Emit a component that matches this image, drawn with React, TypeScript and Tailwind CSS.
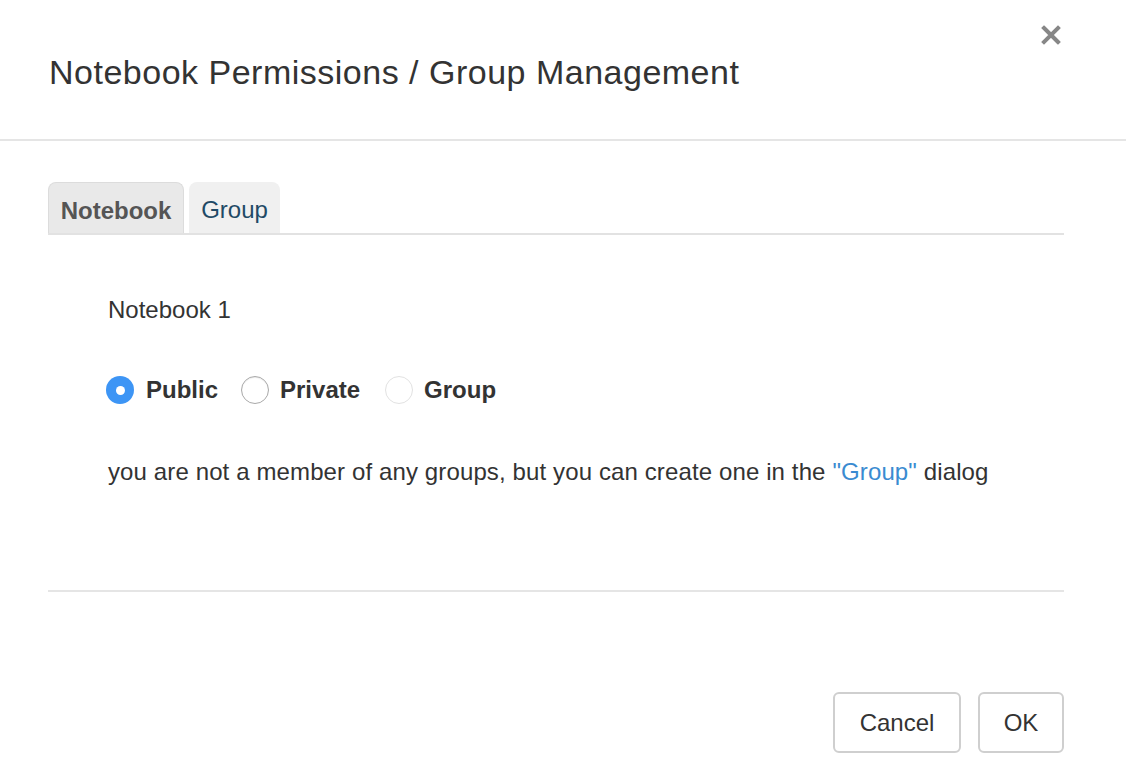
const Radio = ({ checked, disabled }: { checked?: boolean; disabled?: boolean }) => {
  if (checked) {
    return (
      <span className="flex h-[28px] w-[28px] items-center justify-center rounded-full bg-[#3d95f5]">
        <span className="h-[9px] w-[9px] rounded-full bg-white" />
      </span>
    );
  }
  return (
    <span
      className={
        disabled
          ? "h-[28px] w-[28px] rounded-full border border-[#e2e2e2] bg-white"
          : "h-[28px] w-[28px] rounded-full border border-[#a9a9a9] bg-white shadow-[inset_0_1px_1px_rgba(0,0,0,0.08)]"
      }
    />
  );
};

const App = () => {
  return (
    <div className="relative h-[780px] w-[1126px] bg-white font-[family-name:'Liberation_Sans',Arial,sans-serif] text-[#333]">
      {/* header */}
      <div className="h-[141px] border-b-2 border-[#e5e5e5] pl-[49px] pt-[52px]">
        <h4 className="text-[34px] leading-[40px] font-normal tracking-[0.5px] text-[#333]">
          Notebook Permissions / Group Management
        </h4>
      </div>
      <button className="absolute top-[20px] right-[62px] flex h-[30px] w-[26px] items-center justify-center">
        <svg width="20" height="20" viewBox="0 0 20 20">
          <path d="M3 3 L17 17 M17 3 L3 17" stroke="#878787" strokeWidth="4" strokeLinecap="square" />
        </svg>
      </button>

      {/* body */}
      <div className="pl-[48px] pr-[62px] pt-[41px]">
        <div className="flex items-end gap-[5px] border-b-2 border-[#e2e2e2]">
          <div className="flex h-[51px] w-[136px] items-center justify-center rounded-t-[8px] border border-b-0 border-[#dcdcdc] bg-[#e9e9e9] pt-[6px] text-[24px] font-bold text-[#555]">
            Notebook
          </div>
          <div className="flex h-[51px] w-[91px] items-center justify-center rounded-t-[8px] bg-[#f0f0f0] pt-[4px] text-[24px] text-[#1f4a66]">
            Group
          </div>
        </div>

        <div className="pl-[60px]">
          <p className="mt-[60px] text-[24px] leading-[30px]">Notebook 1</p>

          <div className="mt-[50px] flex items-center text-[24px] font-bold leading-[30px]">
            <label className="-ml-[2px] flex items-center gap-[12px]">
              <Radio checked />
              <span>Public</span>
            </label>
            <label className="ml-[23px] flex items-center gap-[11px]">
              <Radio />
              <span>Private</span>
            </label>
            <label className="ml-[25px] flex items-center gap-[11px]">
              <Radio disabled />
              <span>Group</span>
            </label>
          </div>

          <p className="mt-[52px] text-[24px] leading-[30px] tracking-[0.12px]">
            you are not a member of any groups, but you can create one in the{" "}
            <a className="text-[#3a8bd1]">"Group"</a> dialog
          </p>
        </div>

        <div className="mt-[103px] border-b-2 border-[#e5e5e5]" />

        <div className="mt-[100px] flex justify-end gap-[17px]">
          <button className="h-[61px] w-[128px] rounded-[6px] border-2 border-[#cfcfcf] bg-white text-[24px] text-[#333]">
            Cancel
          </button>
          <button className="h-[61px] w-[86px] rounded-[6px] border-2 border-[#cfcfcf] bg-white text-[24px] text-[#333]">
            OK
          </button>
        </div>
      </div>
    </div>
  );
};

export default App;
